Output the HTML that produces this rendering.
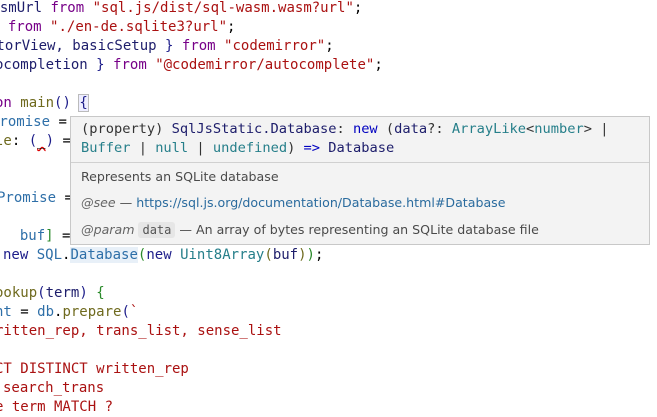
<!DOCTYPE html>
<html><head><meta charset="utf-8"><style>
body{margin:0;width:657px;height:403px;background:#fff;overflow:hidden;position:relative;font-family:"DejaVu Sans Mono","Liberation Mono",monospace;font-size:14px;}
.l{position:absolute;white-space:pre;line-height:19px;height:19px;}
.k{color:#770088}.s{color:#a11}.v{color:#1d1d6b}.b{color:#2e6fa8}.f{color:#6f6a1e}.t{color:#267f8a}.g{color:#2a8a2a}.n{color:#1d1d8a}
.tip{position:absolute;left:70px;top:116px;width:578px;height:127px;background:#f3f3f3;border:1px solid #c8c8c8;}
.tc{position:absolute;left:10px;white-space:pre;font-size:13.7px;line-height:19px;color:#333;}
.sep{position:absolute;left:0;right:0;top:45px;border-top:1px solid #d0d0d0;}
.tx{position:absolute;left:10px;white-space:pre;font-family:"DejaVu Sans","Liberation Sans",sans-serif;font-size:12.6px;color:#4a4a4a;line-height:18px;}
.it{font-style:italic;color:#666}
.lnk{color:#2a6b9e}
.cd{font-family:"DejaVu Sans Mono",monospace;font-size:12px;background:#e6e6e6;padding:1px 4px;border-radius:3px;color:#555}
</style></head><body>
<div class="l" style="left:-17px;top:-1px"><span class="v">wasmUrl</span> <span class="k">from</span> <span class="s">"sql.js/dist/sql-wasm.wasm?url"</span>;</div>
<div class="l" style="left:-9px;top:18px"><span class="v">l</span> <span class="k">from</span> <span class="s">"./en-de.sqlite3?url"</span>;</div>
<div class="l" style="left:-12px;top:37px"><span class="v">itorView, basicSetup</span> <span class="n">}</span> <span class="k">from</span> <span class="s">"codemirror"</span>;</div>
<div class="l" style="left:-5px;top:56px"><span class="v">ocompletion</span> <span class="n">}</span> <span class="k">from</span> <span class="s">"@codemirror/autocomplete"</span>;</div>
<div class="l" style="left:-5px;top:94px"><span class="k">on</span> <span class="f">main</span><span class="n">()</span> <span class="n" style="outline:1px solid #bbb;background:#eef">{</span></div>
<div class="l" style="left:-9px;top:113px"><span class="b">Promise</span> =</div>
<div class="l" style="left:-5px;top:132px"><span class="f">le</span>: <span class="n">(</span><span style="text-decoration:underline wavy #d00">_</span><span class="n">)</span> =</div>
<div class="l" style="left:-3px;top:189px"><span class="b">Promise</span> =</div>
<div class="l" style="left:3px;top:227px">  <span class="b">buf</span><span class="g">]</span> =</div>
<div class="l" style="left:3px;top:246px"><span class="n">new</span> <span class="b">SQL</span>.<span class="b" style="background:#e8f0f8">Database</span><span class="g">(</span><span class="n">new</span> <span class="t">Uint8Array</span><span class="f">(</span><span class="v">buf</span><span class="f">)</span><span class="g">)</span>;</div>
<div class="l" style="left:-5px;top:284px"><span class="f">ookup</span><span class="n">(</span><span class="v">term</span><span class="n">)</span> <span class="g">{</span></div>
<div class="l" style="left:-5px;top:303px"><span class="b">nt</span> = <span class="b">db</span>.<span class="f">prepare</span><span class="n">(</span><span class="s">`</span></div>
<div class="l" style="left:-5px;top:322px"><span class="s">ritten_rep, trans_list, sense_list</span></div>
<div class="l" style="left:-5px;top:360px"><span class="s">CT DISTINCT written_rep</span></div>
<div class="l" style="left:3px;top:379px"><span class="s">search_trans</span></div>
<div class="l" style="left:-5px;top:398px"><span class="s">e term MATCH ?</span></div>
<div class="tip">
<div class="tc" style="top:3px">(property) <span class="v">SqlJsStatic.Database</span>: <span style="color:#0000c0">new</span> (<span class="v">data</span>?: <span class="t">ArrayLike</span>&lt;<span class="t">number</span>&gt; |</div>
<div class="tc" style="top:22px"><span class="t">Buffer</span> | <span class="t">null</span> | <span class="t">undefined</span>) <span style="color:#0000c0">=&gt;</span> <span class="v">Database</span></div>
<div class="sep"></div>
<div class="tx" style="top:51px">Represents an SQLite database</div>
<div class="tx" style="top:77px"><span class="it">@see</span> — <span class="lnk">https://sql.js.org/documentation/Database.html#Database</span></div>
<div class="tx" style="top:104px"><span class="it">@param</span> <span class="cd">data</span> — An array of bytes representing an SQLite database file</div>
</div>
</body></html>
